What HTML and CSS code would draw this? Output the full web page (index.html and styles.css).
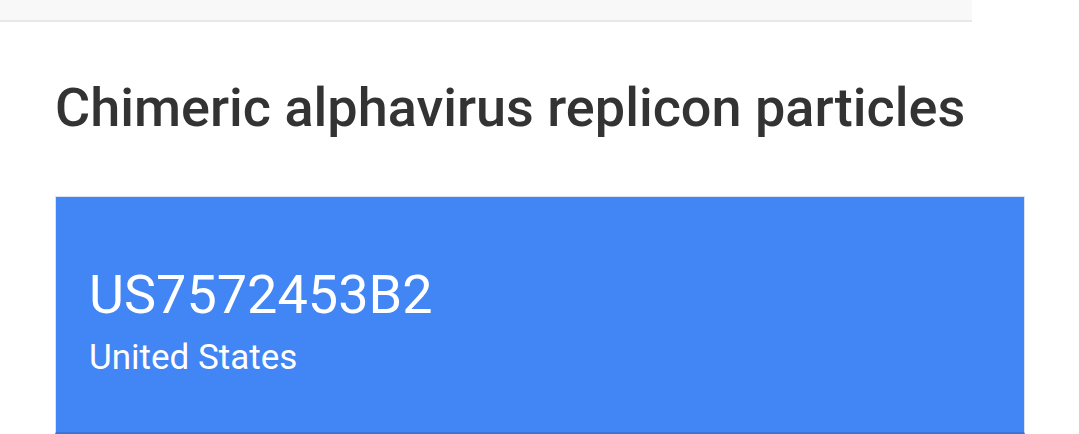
FILE: index.html
```html
<!DOCTYPE html>
<html lang="en">
<head>
    <meta charset="UTF-8">
    <meta name="viewport" content="width=device-width, initial-scale=1.0">
    <title>Chimeric alphavirus replicon particles</title>
    <link rel="stylesheet" href="styles.css">
</head>
<body>
    <div class="top-bar"></div>

    <div class="page">
        <h1 class="title">Chimeric alphavirus replicon particles</h1>

        <div class="patent-card">
            <div class="patent-number">US7572453B2</div>
            <div class="patent-country">United States</div>
        </div>
    </div>
</body>
</html>
```

FILE: styles.css
```css
body {
    font-family: Roboto, "Noto Sans", Arial, sans-serif;
    margin: 0;
    background-color: #ffffff;
    overflow: hidden;
}
.top-bar {
    width: 972px;
    height: 20px;
    background-color: #f8f8f8;
    border-bottom: 2px solid #e8e8e8;
}
.page {
    padding: 0 54px 0 55px;
}
.title {
    margin: 0;
    padding-top: 54px;
    font-size: 54px;
    font-weight: 500;
    color: #333333;
    line-height: 64px;
    white-space: nowrap;
}
.patent-card {
    margin-top: 56px;
    height: 238px;
    box-sizing: border-box;
    background-color: #4285f4;
    border: 1px solid #dce3ee;
    border-bottom: 2px solid #3a74d6;
    color: #ffffff;
    padding: 66px 33px 0;
}
.patent-number {
    font-size: 54px;
    line-height: 64px;
}
.patent-country {
    font-size: 35px;
    line-height: 40px;
    margin-top: 11px;
}
```
